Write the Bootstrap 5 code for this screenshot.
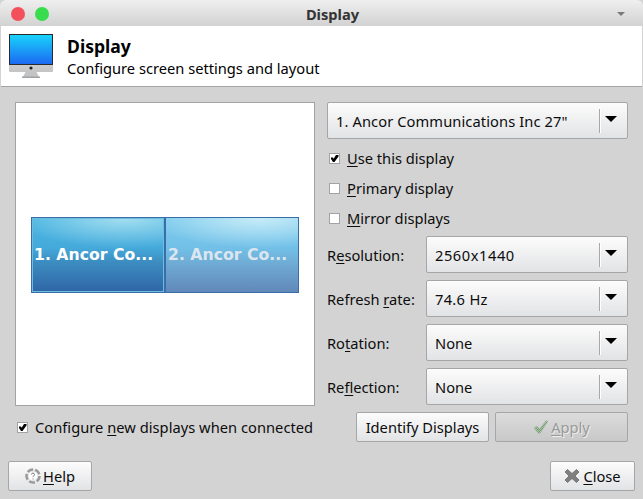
<!DOCTYPE html>
<html lang="en">
<head>
<meta charset="utf-8">
<title>Display</title>
<link href="https://cdn.jsdelivr.net/npm/bootstrap@5.3.0/dist/css/bootstrap.min.css" rel="stylesheet">
<style>
html,body{height:100%}
body{width:643px;height:499px;overflow:hidden;background:#d3d3d3;font-family:"Noto Sans","Open Sans",sans-serif;font-size:14.67px;line-height:20px;color:#0c0c0c}
u{text-underline-offset:2px}
.titlebar{height:26px;background:linear-gradient(#efefef,#d2d2d2);border-radius:6px 6px 0 0;padding:2px 18px 0 11px}
.dot{width:14px;height:14px;border-radius:50%}
.dot-red{background:#f4505c}
.dot-green{background:#38dc4c}
.dots{width:50px;gap:10px}
.wintitle{font-weight:700;font-size:14.67px;color:#333;padding-right:13px}
.menu-tri{width:0;height:0;border-left:4px solid transparent;border-right:4px solid transparent;border-top:4px solid #7a7a7a}
.headbar{height:61px;background:#fff;border-bottom:1px solid #a5a5a5;margin-left:1px;margin-right:1px;padding-left:7px;gap:13px}
.headicon{width:46px;height:46px;flex:none}
.head-title{font-size:17.6px;font-weight:700;line-height:24px;color:#000}
.head-sub{line-height:20px;color:#000}
.mainarea{padding:15px 15px 0 15px;gap:12px}
.leftcol{width:300px}
.rightcol{width:301px}
.preview{height:304px;background:#fff;border:1px solid #a3a3a3;padding:2px 0 0 15px}
.mon{width:134px;height:76px;color:#fff;font-family:"DejaVu Sans",sans-serif;font-weight:700;font-size:15.7px;border:1px solid #3a6ea8;overflow:hidden;white-space:nowrap;padding-left:2px}
.mon1{background:radial-gradient(ellipse 110px 30px at 70% 0,#a5def0,transparent),linear-gradient(#49b5e2 0%,#45aadb 40%,#3c8cc0 60%,#2f65a6 100%);box-shadow:inset 0 0 0 1px #6cbce0}
.mon2{color:#dbe6ee;background:radial-gradient(ellipse 110px 30px at 70% 0,#c8ecf8,transparent),linear-gradient(#7ccbec 0%,#72c0e8 40%,#70add6 60%,#6188b8 100%)}
.fake-btn{background:linear-gradient(#fcfcfc,#e2e3e5);border:1px solid #a4a6a8;border-radius:2px;color:#0c0c0c;font-size:14.67px;line-height:20px;padding:0}
.combo{height:37px;padding-left:8px;padding-right:8px}
.combo-sep{width:1px;height:24px;background:#a8a8a8;box-shadow:1px 0 0 #fff;margin-right:5px}
.combo-tri{width:0;height:0;border-left:6px solid transparent;border-right:6px solid transparent;border-top:6px solid #000;margin-right:2px;margin-top:-3px}
.chk{width:11px;height:11px;flex:none;background:#fff;border:1px solid #a3a3a3;display:block}
.chkrow{height:30px;padding-left:2px;gap:7px}
.firstrow{margin-top:4px}
.formrow{height:37px;margin-top:7px}
.formrow.first-form{margin-top:3px}
.formrow .lbl{width:99px;flex:none}
.formrow .combo{flex:1}
.bottomchk{height:30px;margin-top:6px;gap:7px;padding-left:2px;letter-spacing:.03px}
.btnrow{gap:6px;margin-top:7px}
.bt{height:30px}
.bt-id{width:133px}
.bt-apply{width:133px;background:linear-gradient(#dcdcdc,#c8c8c8);color:#9a9a9a;text-shadow:1px 1px 0 #eee;gap:2px}
.footbar{padding:0 8px;margin-top:19px}
.bt-help{width:84px;gap:2px}
.bt-close{width:85px;gap:3px}
.sp-a{letter-spacing:.1px}
.sp-b{letter-spacing:.55px}
.sp-c{letter-spacing:.3px}
</style>
</head>
<body>
<div class="titlebar d-flex align-items-center">
  <div class="dots d-flex flex-shrink-0"><span class="dot dot-red"></span><span class="dot dot-green"></span></div>
  <div class="wintitle flex-grow-1 text-center">Display</div>
  <div class="menu-tri"></div>
</div>
<div class="headbar d-flex align-items-center">
  <svg class="headicon" viewBox="0 0 46 46" aria-hidden="true">
    <defs>
      <linearGradient id="scr" x1="0" y1="0" x2="0" y2="1"><stop offset="0" stop-color="#19d2fb"/><stop offset="1" stop-color="#1c6af2"/></linearGradient>
      <linearGradient id="alu" x1="0" y1="0" x2="0" y2="1"><stop offset="0" stop-color="#f0f0f0"/><stop offset="1" stop-color="#c4c4c4"/></linearGradient>
      <pattern id="hatch" width="2" height="2" patternUnits="userSpaceOnUse"><rect width="2" height="2" fill="#a9c8a4"/><rect width="1" height="1" fill="#6f9a6a"/><rect x="1" y="1" width="1" height="1" fill="#6f9a6a"/></pattern>
    </defs>
    <polygon points="18,38 28,38 31,44 15,44" fill="#c2c4c6"/>
    <rect x="14" y="43.500" width="18" height="1.500" fill="#a0a2a4"/>
    <rect x="1" y="1" width="44" height="38" rx="1" fill="url(#alu)"/>
    <rect x="1" y="1" width="44" height="31" fill="#2a2a2a"/>
    <rect x="2" y="2" width="42" height="29" fill="url(#scr)"/>
    <circle cx="23" cy="35" r="1.600" fill="#222"/>
  </svg>
  <div>
    <div class="head-title">Display</div>
    <div class="head-sub">Configure screen settings and layout</div>
  </div>
</div>
<div class="mainarea d-flex">
  <div class="leftcol">
    <div class="preview d-flex align-items-center">
      <div class="mon mon1 d-flex align-items-center">1. Ancor Co...</div>
      <div class="mon mon2 d-flex align-items-center">2. Ancor Co...</div>
    </div>
    <div class="bottomchk d-flex align-items-center">
      <svg class="chk" viewBox="0 0 9 9" aria-hidden="true"><path d="M1 3.500h2l.6 1.300L6 1h2.500v1.500L4.500 8H3L1 5z" fill="#000"/></svg>
      <span>Configure <u>n</u>ew displays when connected</span>
    </div>
  </div>
  <div class="rightcol">
    <button type="button" class="fake-btn combo d-flex align-items-center w-100"><span class="flex-grow-1 text-start sp-a">1. Ancor Communications Inc 27"</span><span class="combo-sep"></span><span class="combo-tri"></span></button>
    <div class="chkrow firstrow d-flex align-items-center">
      <svg class="chk" viewBox="0 0 9 9" aria-hidden="true"><path d="M1 3.500h2l.6 1.300L6 1h2.500v1.500L4.500 8H3L1 5z" fill="#000"/></svg>
      <span><u>U</u>se this display</span>
    </div>
    <div class="chkrow d-flex align-items-center"><span class="chk"></span><span><u>P</u>rimary display</span></div>
    <div class="chkrow d-flex align-items-center"><span class="chk"></span><span><u>M</u>irror displays</span></div>
    <div class="formrow first-form d-flex align-items-center"><span class="lbl">R<u>e</u>solution:</span><button type="button" class="fake-btn combo d-flex align-items-center"><span class="flex-grow-1 text-start sp-b">2560x1440</span><span class="combo-sep"></span><span class="combo-tri"></span></button></div>
    <div class="formrow d-flex align-items-center"><span class="lbl">Refresh <u>r</u>ate:</span><button type="button" class="fake-btn combo d-flex align-items-center"><span class="flex-grow-1 text-start sp-c">74.6 Hz</span><span class="combo-sep"></span><span class="combo-tri"></span></button></div>
    <div class="formrow d-flex align-items-center"><span class="lbl">Ro<u>t</u>ation:</span><button type="button" class="fake-btn combo d-flex align-items-center"><span class="flex-grow-1 text-start">None</span><span class="combo-sep"></span><span class="combo-tri"></span></button></div>
    <div class="formrow d-flex align-items-center"><span class="lbl">Re<u>f</u>lection:</span><button type="button" class="fake-btn combo d-flex align-items-center"><span class="flex-grow-1 text-start">None</span><span class="combo-sep"></span><span class="combo-tri"></span></button></div>
    <div class="btnrow d-flex justify-content-end">
      <button type="button" class="fake-btn bt bt-id">Identify Displays</button>
      <button type="button" class="fake-btn bt bt-apply d-flex align-items-center justify-content-center" disabled>
        <svg width="16" height="16" viewBox="0 0 16 16" aria-hidden="true"><path d="M1 9l3-2 2.500 3L13 1.500l2 1L7 14.500H5.500z" fill="url(#hatch)" stroke="#b4b4b4" stroke-width=".5"/></svg>
        <span><u>A</u>pply</span>
      </button>
    </div>
  </div>
</div>
<div class="footbar d-flex justify-content-between">
  <button type="button" class="fake-btn bt bt-help d-flex align-items-center justify-content-center">
    <svg width="16" height="16" viewBox="0 0 16 16" aria-hidden="true"><circle cx="8" cy="8" r="6.500" fill="#e8e8e8" stroke="#9a9a9a" stroke-width="2.500" stroke-dasharray="6 2"/><circle cx="8" cy="8" r="4" fill="#fff"/><path d="M6.500 6.500a1.500 1.500 0 1 1 2 1.500c-.5.200-.5.500-.5 1.200M8 10.500v1" fill="none" stroke="#777" stroke-width="1"/></svg>
    <span><u>H</u>elp</span>
  </button>
  <button type="button" class="fake-btn bt bt-close d-flex align-items-center justify-content-center">
    <svg width="16" height="16" viewBox="0 0 16 16" aria-hidden="true"><path d="M3.500 1.500L8 5.500l4.500-4 2.500 2.500-4 4 4 4-2.500 2.500-4.500-4-4.500 4L1 12l4-4-4-4z" fill="#7f7f7f" stroke="#5f5f5f" stroke-width=".7"/></svg>
    <span><u>C</u>lose</span>
  </button>
</div>
<script src="https://cdn.jsdelivr.net/npm/bootstrap@5.3.0/dist/js/bootstrap.bundle.min.js"></script>
</body>
</html>
